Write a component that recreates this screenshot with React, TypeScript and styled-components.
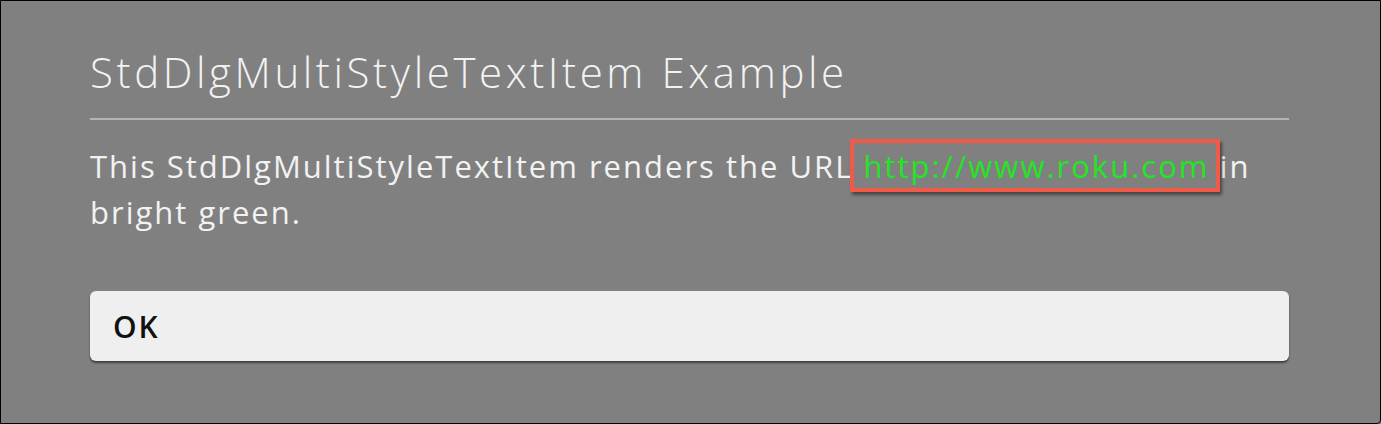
import styled, { createGlobalStyle } from "styled-components";

const GlobalStyle = createGlobalStyle`
  html, body {
    margin: 0;
    padding: 0;
    background: #808080;
  }
`;

const Frame = styled.div`
  box-sizing: border-box;
  width: 1381px;
  height: 424px;
  border: 1px solid #000;
  border-bottom-right-radius: 4px;
  background: #808080;
  padding: 0 91px 0 89px;
  display: flex;
  flex-direction: column;
  font-family: "Open Sans", "Liberation Sans", sans-serif;
  color: #f2f2f2;
`;

const Title = styled.h1`
  margin: 0;
  padding-top: 43px;
  padding-bottom: 18px;
  font-size: 42px;
  line-height: 56px;
  font-weight: 300;
  letter-spacing: 3.6px;
  border-bottom: 2px solid #b4b4b4;
`;

const Body = styled.p`
  margin: 0;
  padding-top: 23px;
  font-size: 31px;
  line-height: 46px;
  font-weight: 400;
  letter-spacing: 2px;
`;

const Link = styled.span`
  position: relative;
  color: #22e622;

  &::after {
    content: "";
    position: absolute;
    left: -13px;
    right: -10px;
    top: -6px;
    bottom: -5px;
    border: 4px solid #f25a48;
    box-shadow: 2px 3px 3px rgba(0, 0, 0, 0.45);
  }
`;

const Button = styled.button`
  margin-top: 56px;
  height: 70px;
  width: 100%;
  border: none;
  border-radius: 6px;
  background: #efefef;
  box-shadow: 0 2px 2px rgba(0, 0, 0, 0.5);
  text-align: left;
  padding: 0 0 0 23px;
  font-family: "Open Sans", "Liberation Sans", sans-serif;
  font-size: 30px;
  font-weight: 600;
  letter-spacing: 2px;
  color: #111;
`;

export default function App() {
  return (
    <>
      <GlobalStyle />
      <Frame>
        <Title>StdDlgMultiStyleTextItem Example</Title>
        <Body>
          This StdDlgMultiStyleTextItem renders the URL <Link>http://www.roku.com</Link> in bright green.
        </Body>
        <Button>OK</Button>
      </Frame>
    </>
  );
}
